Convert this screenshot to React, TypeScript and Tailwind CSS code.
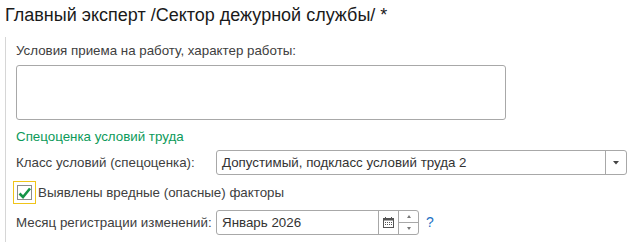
import React from "react";

const font = { fontFamily: '"Liberation Sans", Arial, sans-serif' };

function CalendarIcon() {
  return (
    <svg width="11" height="11" viewBox="0 0 11 11">
      <rect x="0.5" y="1.5" width="10" height="9" fill="none" stroke="#555" />
      <rect x="0.5" y="1.5" width="10" height="2" fill="#555" />
      <rect x="2" y="0" width="1" height="2" fill="#555" />
      <rect x="8" y="0" width="1" height="2" fill="#555" />
      <rect x="2" y="5" width="1" height="1" fill="#555" />
      <rect x="4" y="5" width="1" height="1" fill="#555" />
      <rect x="6" y="5" width="1" height="1" fill="#555" />
      <rect x="8" y="5" width="1" height="1" fill="#555" />
      <rect x="2" y="7" width="1" height="1" fill="#555" />
      <rect x="4" y="7" width="1" height="1" fill="#555" />
      <rect x="6" y="7" width="1" height="1" fill="#555" />
      <rect x="8" y="7" width="1" height="1" fill="#555" />
    </svg>
  );
}

export default function App() {
  return (
    <div className="w-[639px] h-[242px] bg-white overflow-hidden text-[#404040]" style={font}>
      <div className="pl-[5px] pt-[4px] text-[18px] leading-[22px] text-[#1a1a1a]">
        Главный эксперт /Сектор дежурной службы/ *
      </div>
      <div className="ml-[5px] mt-[11px] border-l border-[#d6d6d6] pl-[10px] pt-[6px] h-[220px]">
        <div className="text-[13.33px] leading-[16px]">Условия приема на работу, характер работы:</div>
        <div className="mt-[6px] w-[490px] h-[55px] border border-[#a8a8a8] rounded-[3px] bg-white" />
        <div className="mt-[9px] text-[13.33px] leading-[16px] text-[#0c9a5a]">Спецоценка условий труда</div>
        <div className="mt-[5px] flex items-center h-[25px]">
          <div className="w-[200px] text-[13.33px] leading-[16px]">Класс условий (спецоценка):</div>
          <div className="flex h-[25px] w-[411px] border border-[#a8a8a8] rounded-[3px] bg-white">
            <div className="flex-1 flex items-center pl-[5px] text-[13.33px] text-[#333]">
              Допустимый, подкласс условий труда 2
            </div>
            <div className="w-[21px] border-l border-[#a8a8a8] flex items-center justify-center">
              <svg width="6" height="4" viewBox="0 0 6 4">
                <path d="M0 0H6L3 3.5Z" fill="#444" />
              </svg>
            </div>
          </div>
        </div>
        <div className="mt-[4px] flex items-center h-[27px]">
          <div className="-ml-[3px] w-[23px] h-[23px] border border-[#f0c419] flex items-center justify-center">
            <div className="w-[15px] h-[15px] border border-[#8c8c8c] bg-white flex items-center justify-center">
              <svg width="13" height="12" viewBox="0 0 13 12">
                <path d="M1.5 6.5L5 10L12 1.5" fill="none" stroke="#159447" strokeWidth="2.6" />
              </svg>
            </div>
          </div>
          <div className="ml-[2px] text-[13.33px] leading-[16px]">Выявлены вредные (опасные) факторы</div>
        </div>
        <div className="mt-[4px] flex items-center h-[25px]">
          <div className="w-[200px] text-[13.33px] leading-[16px]">Месяц регистрации изменений:</div>
          <div className="flex h-[25px] w-[203px] border border-[#a8a8a8] rounded-[3px] bg-white">
            <div className="flex-1 flex items-center pl-[5px] text-[13.33px] text-[#333]">Январь 2026</div>
            <div className="w-[20px] border-l border-[#a8a8a8] flex items-center justify-center">
              <CalendarIcon />
            </div>
            <div className="w-[20px] border-l border-[#a8a8a8] flex flex-col">
              <div className="flex-1 flex items-center justify-center border-b border-[#a8a8a8]">
                <svg width="4" height="3" viewBox="0 0 4 3">
                  <path d="M0 3H4L2 0Z" fill="#777" />
                </svg>
              </div>
              <div className="flex-1 flex items-center justify-center">
                <svg width="4" height="3" viewBox="0 0 4 3">
                  <path d="M0 0H4L2 3Z" fill="#777" />
                </svg>
              </div>
            </div>
          </div>
          <div className="ml-[7px] text-[14px] text-[#1f72c4]">?</div>
        </div>
      </div>
    </div>
  );
}
